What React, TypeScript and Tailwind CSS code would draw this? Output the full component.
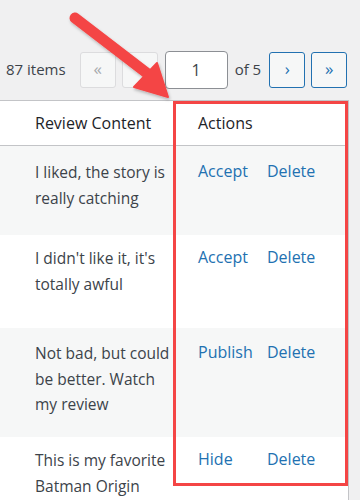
import React from 'react';

const ROWS = [
  { text: 'I liked, the story is really catching', actions: ['Accept', 'Delete'], bg: 'bg-[#f6f7f7]', h: 'h-[89px]', pt: 'pt-[14px]' },
  { text: "I didn't like it, it's totally awful", actions: ['Accept', 'Delete'], bg: 'bg-white', h: 'h-[93px]', pt: 'pt-[11px]' },
  { text: 'Not bad, but could be better. Watch my review', actions: ['Publish', 'Delete'], bg: 'bg-[#f6f7f7]', h: 'h-[109px]', pt: 'pt-[13px]' },
  { text: 'This is my favorite Batman Origin movie', actions: ['Hide', 'Delete'], bg: 'bg-white', h: 'h-[110px]', pt: 'pt-[11px]' },
];

const PageBtn = ({ label, active }: { label: string; active?: boolean }) => (
  <div
    className={`w-[36px] h-[36px] rounded-[3px] border flex items-center justify-center text-[17px] leading-none ${
      active ? 'border-[#2271b1] text-[#2271b1] bg-[#f6f7f7]' : 'border-[#dcdcde] text-[#a7aaad] bg-[#f6f7f7]'
    }`}
  >
    <span className="-mt-[3px]">{label}</span>
  </div>
);

export default function App() {
  return (
    <div
      className="relative w-[360px] h-[500px] overflow-hidden bg-[#f0f0f1] text-[#3c434a]"
      style={{ fontFamily: '"Open Sans", "Noto Sans", sans-serif' }}
    >
      {/* Pagination */}
      <div className="h-[100px] flex items-end pb-[12px] pl-[6px] text-[15px]">
        <span className="mr-[14px] mb-[8px]">87 items</span>
        <PageBtn label="«" />
        <div className="w-[6px]" />
        <PageBtn label="‹" />
        <div className="ml-[7px] w-[63px] h-[38px] bg-white border border-[#8c8f94] rounded-[4px] flex items-center justify-center -mb-[1px] text-[16px]">
          1
        </div>
        <span className="ml-[7px] mb-[8px]">of 5</span>
        <div className="ml-[8px]">
          <PageBtn label="›" active />
        </div>
        <div className="ml-[6px]">
          <PageBtn label="»" active />
        </div>
      </div>

      {/* Table */}
      <div className="w-[349px] bg-white border-t border-r border-[#c3c4c7] text-[16px]">
        <div className="flex h-[45px] items-center border-b border-[#c3c4c7] text-[#1d2327]">
          <div className="w-[173px] pl-[35px]">Review Content</div>
          <div className="pl-[25px]">Actions</div>
        </div>
        {ROWS.map((row, i) => (
          <div key={i} className={`flex ${row.bg} ${row.h} ${row.pt} leading-[25.5px]`}>
            <div className="w-[173px] shrink-0 pl-[35px] text-[15.5px]">{row.text}</div>
            <div className="pl-[25px] flex text-[#2271b1] -mt-[1px]">
              <span className="w-[69px]">{row.actions[0]}</span>
              <span>{row.actions[1]}</span>
            </div>
          </div>
        ))}
      </div>

      {/* Annotation box */}
      <div className="absolute left-[173px] top-[101px] w-[175px] h-[385px] border-[3px] border-[#f44545] pointer-events-none" />

      {/* Annotation arrow */}
      <svg className="absolute left-0 top-0 pointer-events-none" width="360" height="120" viewBox="0 0 360 120">
        <defs>
          <filter id="sh" x="-20%" y="-20%" width="140%" height="140%">
            <feDropShadow dx="1" dy="2" stdDeviation="1.5" floodColor="#000" floodOpacity="0.25" />
          </filter>
        </defs>
        <g filter="url(#sh)" fill="#f44545" stroke="#f44545">
          <line x1="75" y1="18" x2="148" y2="74" strokeWidth="11" strokeLinecap="round" />
          <polygon points="168,97 134,87 157,63" strokeWidth="2" strokeLinejoin="round" />
        </g>
      </svg>
    </div>
  );
}
